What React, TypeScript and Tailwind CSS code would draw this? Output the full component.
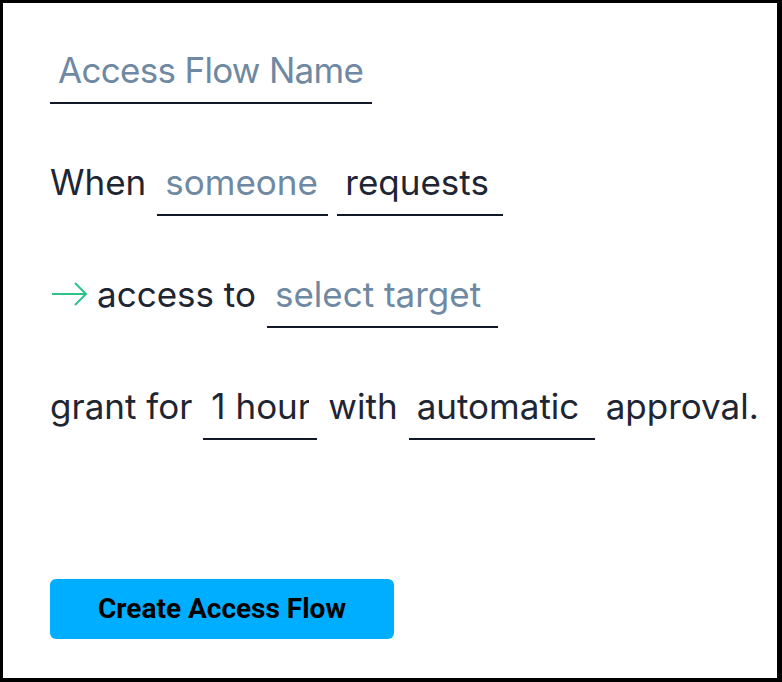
import { useState } from 'react';

// Campo subrayado, con el texto a la altura de las etiquetas
function Field({ width, placeholder, value, tight }: { width: string; placeholder: string; value?: string; tight?: boolean }) {
  const [v, setV] = useState(value ?? '');
  return (
    <input
      value={v}
      onChange={(e) => setV(e.target.value)}
      placeholder={placeholder}
      className={`${width} ${tight ? 'tracking-[-0.02em]' : ''} h-[54px] px-2 pb-[12px] pt-0 border-b-2 border-[#111827] bg-transparent text-[35px] leading-[40px] text-[#1e2533] placeholder:text-[#6f89a2] outline-none`}
    />
  );
}

function Label({ children }: { children: React.ReactNode }) {
  return <span className="text-[35px] leading-[40px] text-[#1e2533] whitespace-nowrap">{children}</span>;
}

export default function App() {
  return (
    <div
      className="w-[782px] h-[682px] bg-white border-black border-l-[3px] border-t-[3px] border-r-[5px] border-b-[4px] pl-[47px] pt-[47px] flex flex-col"
      style={{ fontFamily: 'Inter, "Noto Sans", sans-serif' }}
    >
      <div className="flex">
        <Field width="w-[322px]" placeholder="Access Flow Name" tight />
      </div>

      <div className="flex items-start gap-[11px] mt-[58px]">
        <Label>When</Label>
        <Field width="w-[171px]" placeholder="someone" />
        <div className="-ml-[2px] flex">
          <Field width="w-[166px]" placeholder="requests" value="requests" />
        </div>
      </div>

      <div className="flex items-start gap-[11px] mt-[58px]">
        <span className="flex items-center h-[40px] pl-[2px] -mr-[2px]">
          <svg width="36" height="26" viewBox="0 0 36 26" fill="none" stroke="#2bc48a" strokeWidth="2">
            <path d="M0 13h34" />
            <path d="M23 2l11 11-11 11" />
          </svg>
        </span>
        <Label>access to</Label>
        <Field width="w-[231px]" placeholder="select target" />
      </div>

      <div className="flex items-start gap-[11px] mt-[58px]">
        <Label>grant for</Label>
        <Field width="w-[114px]" placeholder="duration" value="1 hour" />
        <Label>with</Label>
        <Field width="w-[186px]" placeholder="approval" value="automatic" />
        <Label>approval.</Label>
      </div>

      <button
        className="mt-[139px] w-[344px] h-[60px] rounded-md bg-[#00aeff] text-black text-[28px] font-bold"
        style={{ fontFamily: 'Roboto, "Liberation Sans", sans-serif' }}
      >
        Create Access Flow
      </button>
    </div>
  );
}
